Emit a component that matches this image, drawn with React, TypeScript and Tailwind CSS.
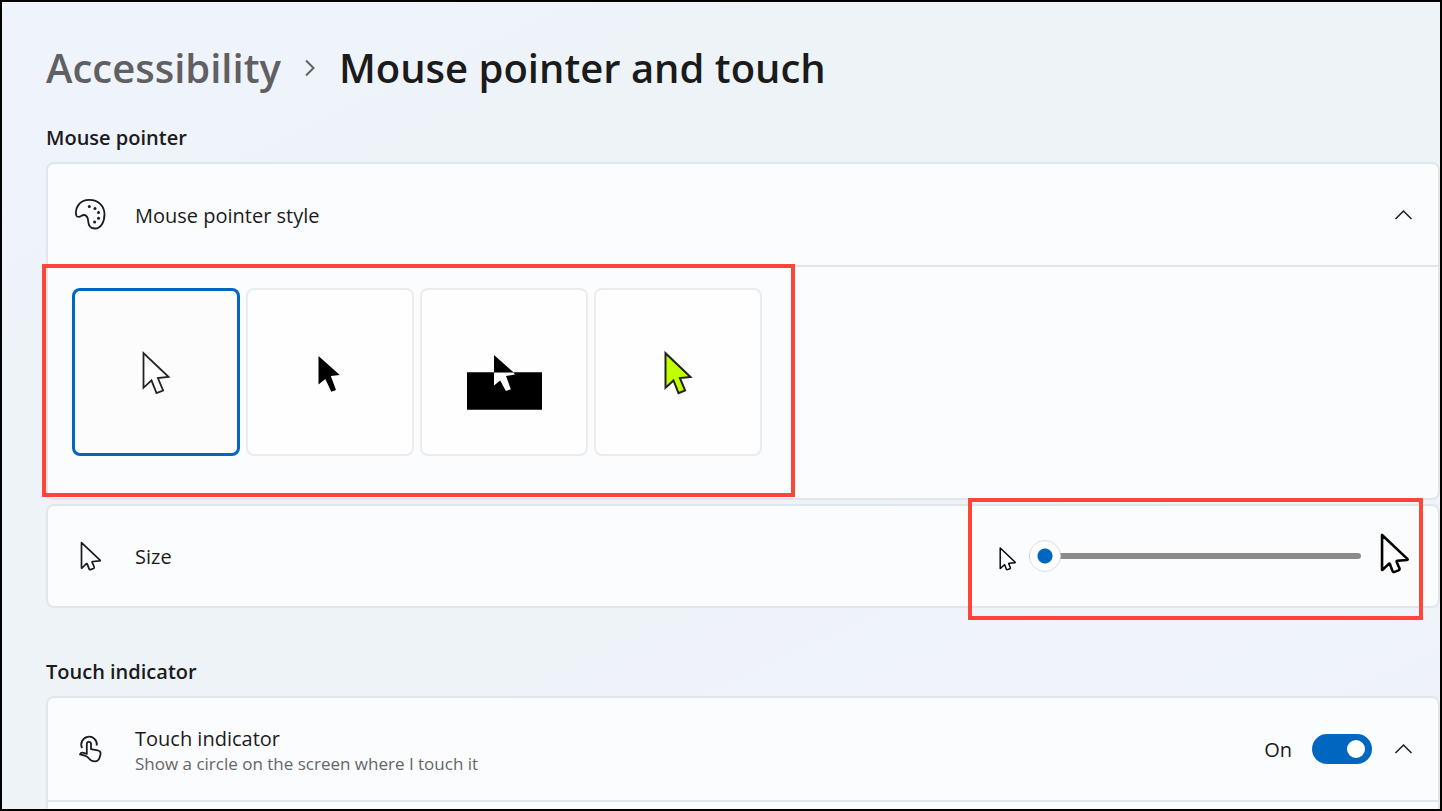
import React, { useState } from "react";

const POINTER_PATH =
  "M7.5 2.6v25.2q0 .8.6.2l4.3-4.3q.5-.5.8.2l1.9 5q.4 1.1 1.5.7l2.9-1.1q1.1-.5.7-1.5l-2-4.6q-.3-.8.5-.9l7-.6q1-.1.3-.8z";

const Chevron: React.FC = () => (
  <svg viewBox="0 0 18 18" className="size-[18px] shrink-0" fill="none" stroke="#1b1b1b" strokeWidth="1.5">
    <path d="M1.5 13 9.5 5l8 8" />
  </svg>
);

const PaletteIcon: React.FC = () => (
  <svg viewBox="0 0 32 32" className="size-8 shrink-0" fill="none" stroke="#1b1b1b" strokeWidth="1.8">
    <path d="M2.4 16.8C.5 10.200 4.500.9 15.500.9c9 0 15 6.300 15 14.400 0 8.200-4 14.200-9.500 14.200-5.200 0-6.500-3.200-6.700-6.800-.2-4-1.300-6.400-4-6.700-2.400-.2-3.600 1.900-5.300 1.900-1.400 0-2.300-.3-2.600-1.100z" />
    <g fill="#1b1b1b" stroke="none">
      <circle cx="15.300" cy="7.400" r="1.500" />
      <circle cx="21" cy="9.400" r="1.500" />
      <circle cx="24.500" cy="13.600" r="1.500" />
      <circle cx="24.500" cy="19.200" r="1.500" />
      <circle cx="20.600" cy="22.900" r="1.500" />
    </g>
  </svg>
);

const PointerIcon: React.FC = () => (
  <svg viewBox="0 0 32 32" className="size-8 shrink-0" fill="none" stroke="#1b1b1b" strokeWidth="1.7" strokeLinejoin="round">
    <path d={POINTER_PATH} />
  </svg>
);

const TouchIcon: React.FC = () => (
  <svg viewBox="0 0 32 32" className="size-8 shrink-0" fill="none" stroke="#1b1b1b" strokeWidth="1.8" strokeLinejoin="round">
    <path d="M8.100 15A7.800 7.800 0 1 1 22.800 12.500" />
    <path d="M12.800 21V11a2.100 2.100 0 0 1 4.200 0v5.200l6.600 1.200c2.100.4 3.300 1.900 2.900 4l-1 3.400c-.7 2.500-2.300 3.500-4.600 3.500-2.800 0-4.200-.7-5.700-2.600-2.100-2.700-4.300-3.500-9.200-4.300.6-1.500 2.100-2.100 3.700-1.600z" />
  </svg>
);

const ARROW = "M71.500 65.200V99.800l8-7.400 5 12.700 6.600-2.600-5.200-12.500 10.600-1.100z";

const pointerStyles = [
  {
    id: "white",
    label: "White",
    art: <path d={ARROW} fill="#fff" stroke="#222" strokeWidth="1.8" />,
  },
  {
    id: "black",
    label: "Black",
    art: <path d="M72.500 68V96.500l6.800-5.500 6 12.700 4.700-1.700-5.200-13.900 9-1z" fill="#000" />,
  },
  {
    id: "inverted",
    label: "Inverted",
    art: (
      <>
        <path d="M47 84.300h75v37.400H47z" fill="#000" />
        <path d="M74 67v17.300h19.500z" fill="#000" />
        <path d="M74 84.300V97.500l6.200-5 5.700 10.500 4.900-1.700-4.800-13.300 9-1.500-2-2.200z" fill="#fff" />
        <path d="M74 84.500h20" stroke="#777" />
      </>
    ),
  },
  {
    id: "custom",
    label: "Custom",
    art: <path d={ARROW} fill="#bfff00" stroke="#222" strokeWidth="2" />,
  },
];

const App: React.FC = () => {
  const [style, setStyle] = useState("white");
  const [size, setSize] = useState(1);
  const [touch, setTouch] = useState(true);

  return (
    <main className="h-screen overflow-hidden border-2 border-black bg-[linear-gradient(155deg,#eff3fb_0%,#eff3fb_12%,#eef3f8_24%,#eef3f8_60%,#f0f3fb_78%,#eef3f8_100%)] pl-11 font-['Open_Sans','Noto_Sans',sans-serif] text-[#1b1b1b]">
      <h1 className="flex items-center pt-[39px] text-[40px] leading-[54px] font-semibold">
        <a href="#accessibility" className="text-[#5f6061]">
          Accessibility
        </a>
        <svg viewBox="0 0 12 18" className="mx-[23px] h-[18px] w-3" fill="none" stroke="#5f6061" strokeWidth="2">
          <path d="M2 1.500 9.500 9 2 16.500" />
        </svg>
        <span>Mouse pointer and touch</span>
      </h1>

      <h2 className="mt-[30px] mb-[11px] text-xl leading-[26px] font-semibold">Mouse pointer</h2>

      <section className="rounded-lg border-2 border-[#e1e6eb] bg-[#fbfcfe]">
        <button type="button" aria-expanded="true" className="flex h-[101px] w-full items-center px-[26px] text-left">
          <PaletteIcon />
          <span className="ml-[29px] flex-1 pt-0.5 text-xl">Mouse pointer style</span>
          <Chevron />
        </button>
        <div className="border-t-2 border-[#e1e6eb] px-6 pt-[21px] pb-[42px]">
          <div role="radiogroup" aria-label="Mouse pointer style" className="relative flex w-fit gap-1.5">
            {pointerStyles.map((item) => (
              <label
                key={item.id}
                className="size-[168px] rounded-lg bg-[#fefefe] inset-ring-2 inset-ring-[#ebecee] has-checked:bg-[#fcfcfc] has-checked:inset-ring-3 has-checked:inset-ring-[#0067c0]"
              >
                <input
                  type="radio"
                  name="pointer-style"
                  aria-label={item.label}
                  className="sr-only"
                  checked={style === item.id}
                  onChange={() => setStyle(item.id)}
                />
                <svg viewBox="0 0 168 168" className="size-full">
                  {item.art}
                </svg>
              </label>
            ))}
            <div className="pointer-events-none absolute -top-6 -right-[33px] -bottom-[41px] -left-[30px] border-4 border-[#ff453a]" />
          </div>
        </div>
      </section>

      <section className="mt-1 flex h-[104px] items-center rounded-lg border-2 border-[#e1e6eb] bg-[#fbfcfe] px-[26px]">
        <PointerIcon />
        <label htmlFor="pointer-size" className="ml-[29px] flex-1 pt-0.5 text-xl">
          Size
        </label>
        <div className="relative flex items-center">
          <svg viewBox="6 -6.200 22.500 37.500" className="mr-3 h-[30px] w-[18px]" fill="#fff" stroke="#000" strokeWidth="1.800" strokeLinejoin="round">
            <path d={POINTER_PATH} />
          </svg>
          <input
            id="pointer-size"
            type="range"
            min={1}
            max={15}
            value={size}
            onChange={(e) => setSize(Number(e.target.value))}
            className="h-8 w-[332px] appearance-none bg-transparent [&::-webkit-slider-runnable-track]:h-1.5 [&::-webkit-slider-runnable-track]:rounded-full [&::-webkit-slider-runnable-track]:bg-[#8b8b8b] [&::-webkit-slider-thumb]:-mt-[13px] [&::-webkit-slider-thumb]:size-8 [&::-webkit-slider-thumb]:appearance-none [&::-webkit-slider-thumb]:rounded-full [&::-webkit-slider-thumb]:border [&::-webkit-slider-thumb]:border-[#dddddd] [&::-webkit-slider-thumb]:bg-[radial-gradient(circle,#0067c0_7px,#ffffff_8px)]"
          />
          <svg viewBox="6 0.500 23.400 35" className="ml-[19px] h-12 w-8" fill="#fff" stroke="#000" strokeWidth="1.900" strokeLinejoin="round">
            <path d={POINTER_PATH} />
          </svg>
          <div className="pointer-events-none absolute -top-[34px] -right-[11px] -bottom-10 -left-[31px] border-4 border-[#ff453a]" />
        </div>
      </section>

      <h2 className="mt-[51px] mb-[11px] text-xl leading-[26px] font-semibold">Touch indicator</h2>

      <section className="rounded-lg border-2 border-[#e1e6eb] bg-[#fbfcfe]">
        <div className="flex h-[102px] items-center px-[26px]">
          <TouchIcon />
          <div className="ml-[29px] flex-1 pt-0.5">
            <label htmlFor="touch-indicator" className="block text-xl leading-7">
              Touch indicator
            </label>
            <p className="text-[17px] leading-[22px] text-[#646567]">Show a circle on the screen where I touch it</p>
          </div>
          <span className="mr-5 pt-0.5 text-xl">{touch ? "On" : "Off"}</span>
          <input
            id="touch-indicator"
            type="checkbox"
            role="switch"
            checked={touch}
            onChange={(e) => setTouch(e.target.checked)}
            className="mr-[22px] flex h-[30px] w-[60px] appearance-none items-center rounded-full bg-[#8b8b8b] px-[7px] before:size-[18px] before:rounded-full before:bg-white checked:justify-end checked:bg-[#0067c0]"
          />
          <button type="button" aria-label="Collapse touch indicator" aria-expanded="true">
            <Chevron />
          </button>
        </div>
        <div className="h-24 border-t-2 border-[#e1e6eb]" />
      </section>
    </main>
  );
};

export default App;
